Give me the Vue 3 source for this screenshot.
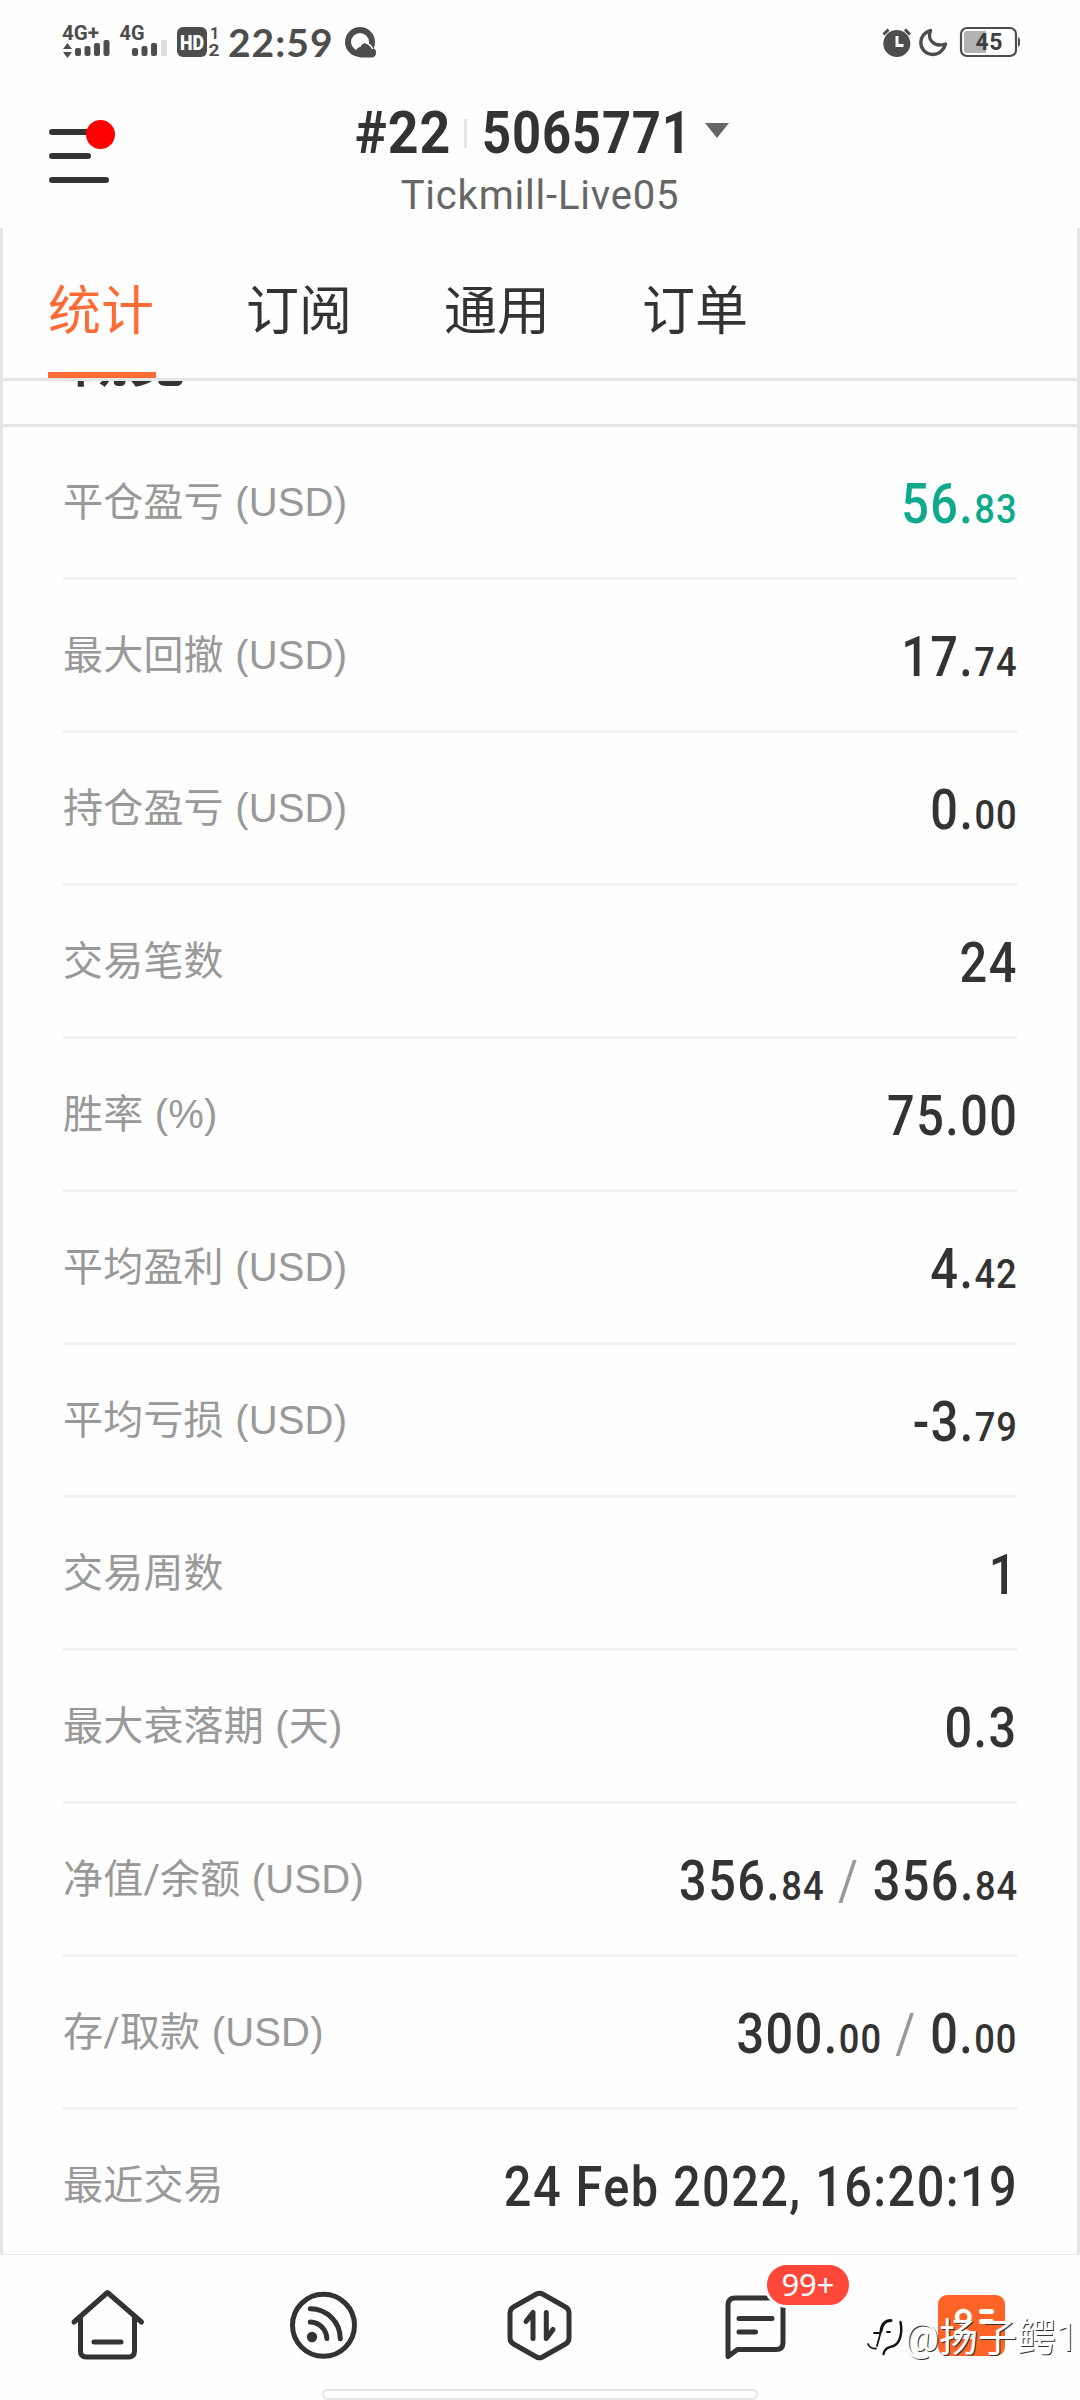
<script setup>
const tabs = ['统计', '订阅', '通用', '订单']

// Each value is a list of [integer part, decimals] pairs
const rows = [
  { label: '平仓盈亏', unit: '(USD)', parts: [['56.', '83']], positive: true },
  { label: '最大回撤', unit: '(USD)', parts: [['17.', '74']] },
  { label: '持仓盈亏', unit: '(USD)', parts: [['0.', '00']] },
  { label: '交易笔数', parts: [['24', '']] },
  { label: '胜率', unit: '(%)', parts: [['75.00', '']] },
  { label: '平均盈利', unit: '(USD)', parts: [['4.', '42']] },
  { label: '平均亏损', unit: '(USD)', parts: [['-3.', '79']] },
  { label: '交易周数', parts: [['1', '']] },
  { label: '最大衰落期', unit: '(天)', parts: [['0.3', '']] },
  { label: '净值/余额', unit: '(USD)', parts: [['356.', '84'], ['356.', '84']] },
  { label: '存/取款', unit: '(USD)', parts: [['300.', '00'], ['0.', '00']] },
  { label: '最近交易', parts: [['24 Feb 2022, 16:20:19', '']] },
]
</script>

<template>
  <div class="screen">
    <div class="status">
      <div class="status-left">
        <svg class="signals" width="160" height="40" viewBox="62 22 160 40">
          <g fill="#4d4d4d">
            <text x="62" y="40" class="net" textLength="37" lengthAdjust="spacingAndGlyphs">4G+</text>
            <path d="M67.5 43l4.5 6h-9zM67.5 58l4.5-6h-9z" />
            <rect x="75" y="48" width="6" height="8" rx="2" />
            <rect x="84.5" y="46" width="6" height="10" rx="2" />
            <rect x="94" y="43" width="6" height="13" rx="2" />
            <rect x="103.500" y="40" width="6" height="16" rx="2" />
            <text x="119.500" y="40" class="net" textLength="25" lengthAdjust="spacingAndGlyphs">4G</text>
            <rect x="132" y="48" width="6" height="8" rx="2" />
            <rect x="141.500" y="46" width="6" height="10" rx="2" />
            <rect x="151" y="43" width="6" height="13" rx="2" />
            <rect x="161" y="40" width="6" height="16" rx="1" fill="#dedede" />
            <rect x="177" y="27" width="30" height="30" rx="6" />
            <text x="180" y="49.500" class="hd" fill="#fff" textLength="24" lengthAdjust="spacingAndGlyphs">HD</text>
            <text x="210" y="38.500" class="sim">1</text>
            <text x="208.500" y="56" class="sim" textLength="11" lengthAdjust="spacingAndGlyphs">2</text>
          </g>
        </svg>
        <span class="time">22:59</span>
        <svg class="q-icon" width="32" height="32" viewBox="344 26 32 32">
          <circle cx="360" cy="42" r="12" fill="none" stroke="#4d4d4d" stroke-width="6" />
          <path d="M361 57.500a5.300 5.300 0 0 1-.6-10.500 6.200 6.200 0 0 1 11.800 1 4.800 4.800 0 0 1-1 9.500z" fill="#4d4d4d" />
          <path d="M365.500 43c3 .5 5.500 2.500 7.200 6" fill="none" stroke="#fff" stroke-width="1.600" />
        </svg>
      </div>
      <svg width="140" height="36" viewBox="880 24 140 36">
        <circle cx="896.800" cy="43.500" r="13.500" fill="#4d4d4d" />
        <path d="M883.500 34.500l5-5M910 34.500l-5-5" stroke="#4d4d4d" stroke-width="3" />
        <path d="M897 36v9.500h6.500" fill="none" stroke="#fff" stroke-width="3" />
        <path d="M930.500 30.500c-3.500 8.500 3 17.500 15 13.500-1.500 6-6.500 10.500-12.700 10.500-7 0-12-5.500-12-12 0-5.500 3.700-10.500 9.700-12z" fill="none" stroke="#4d4d4d" stroke-width="3.400" stroke-linejoin="round" />
        <rect x="961" y="28" width="55" height="28" rx="6" fill="#fff" stroke="#4d4d4d" stroke-width="2.200" />
        <path d="M986 31h-19a3 3 0 0 0-3 3v16a3 3 0 0 0 3 3h19z" fill="#b2b2b2" />
        <path d="M1018 37q2 1 2 3v4q0 2-2 3z" fill="#4d4d4d" />
        <text x="975.500" y="50" class="batt" fill="#404040" textLength="27">45</text>
      </svg>
    </div>

    <header class="header">
      <div class="menu">
        <i class="bar long"></i><i class="bar mid"></i><i class="bar long"></i>
        <b class="dot"></b>
      </div>
      <div class="account">
        <div class="account-row">
          <span class="rank">#22</span>
          <i class="sep"></i>
          <span class="login">5065771</span>
          <svg width="24" height="16" viewBox="0 0 24 16"><path d="M0 0h24L12 15z" fill="#666" /></svg>
        </div>
        <div class="server"><span>Tickmill-Live05</span></div>
      </div>
    </header>

    <main class="panel">
      <nav class="tabs">
        <span v-for="(t, i) in tabs" :key="t" class="tab" :class="{ active: i === 0 }">{{ t }}</span>
      </nav>
      <div class="section"><span class="section-title">概览</span></div>
      <div class="rows">
        <div v-for="r in rows" :key="r.label" class="row">
          <span class="label">{{ r.label }}<span v-if="r.unit" class="unit">&nbsp;{{ r.unit }}</span></span>
          <span class="value" :class="{ positive: r.positive }">
            <template v-for="(p, i) in r.parts" :key="i"><span v-if="i" class="slash">/</span>{{ p[0] }}<small v-if="p[1]">{{ p[1] }}</small></template>
          </span>
        </div>
      </div>
    </main>

    <footer class="nav">
      <div class="nav-item">
        <svg width="100" height="100" viewBox="58 2275 100 100" class="line">
          <path d="M74 2322l33.500-29.500L141.500 2322" />
          <path d="M80.500 2317v34q0 6 6 6h42q6 0 6-6v-34M94 2342h27" />
        </svg>
      </div>
      <div class="nav-item">
        <svg width="100" height="100" viewBox="274 2275 100 100" class="line">
          <circle cx="323.500" cy="2325.300" r="31" />
          <circle cx="312" cy="2337" r="5.200" fill="#333" stroke="none" />
          <path d="M310.300 2322a17 17 0 0 1 16.500 16.500M310.300 2308.700a30 30 0 0 1 30 30" />
        </svg>
      </div>
      <div class="nav-item">
        <svg width="100" height="100" viewBox="490 2275 100 100" class="line">
          <path d="M536.500 2294q3-1.700 6 0l23 13q3.500 2 3.500 6v25q0 4-3.500 6l-23 13q-3 1.700-6 0l-23-13q-3.500-2-3.500-6v-25q0-4 3.500-6z" />
          <path d="M526 2321.500l7-9v26M546.300 2312.500v26l6.700-9" />
        </svg>
      </div>
      <div class="nav-item">
        <svg width="100" height="100" viewBox="706 2275 100 100" class="line">
          <path d="M728 2356.500V2305q0-7 7-7h41q7 0 7 7v37.500q0 7-7 7h-38.500z" />
          <path d="M739 2318.500h33M739 2332h16.500" />
        </svg>
        <span class="badge">99+</span>
      </div>
      <div class="nav-item">
        <svg width="100" height="100" viewBox="922 2275 100 100">
          <rect x="938" y="2295" width="67" height="61" rx="9" fill="#ff6426" />
          <circle cx="963.300" cy="2317" r="6.300" fill="none" stroke="#fff" stroke-width="4.500" />
          <path d="M953 2339q0-10 10.300-10t10.300 10z" fill="#fff" />
          <path d="M981.500 2311.500h10M981.500 2321.500h10" stroke="#fff" stroke-width="5" stroke-linecap="round" />
        </svg>
      </div>
      <i class="home-bar"></i>
      <div class="watermark">
        <svg width="40" height="42" viewBox="864 2324 40 42" fill="none" stroke="#111" stroke-linecap="round">
          <path d="M881 2338c1-8 5-10.500 10-10.500" stroke-width="3" />
          <path d="M900.500 2329c2 10 0 21-7 24-5 1.500-9 2-10 8" stroke-width="2.400" />
          <path d="M874 2340h6.500l-3.500 13M887 2339h3M868 2351q2 5 8 4.500" stroke-width="1.800" />
        </svg>
        <span>@扬子鳄1</span>
      </div>
    </footer>
  </div>
</template>

<style>
body { margin: 0; background: #fff; }
</style>

<style scoped>
.screen {
  width: 1080px;
  height: 2400px;
  display: flex;
  flex-direction: column;
  overflow: hidden;
  background: #fefefe;
  color: #333;
  font-family: Roboto, "Noto Sans CJK SC", sans-serif;
}
.status {
  height: 84px;
  box-sizing: border-box;
  padding: 0 60px 0 62px;
  display: flex;
  align-items: center;
  justify-content: space-between;
  flex: none;
}
.status-left { display: flex; align-items: center; }
.net { font: 700 21px Roboto, sans-serif; }
.hd { font: 900 20px Roboto, sans-serif; }
.sim { font: 700 16px Roboto, sans-serif; }
.batt { font: 700 23px Roboto, sans-serif; }
.time {
  width: 122px;
  padding-left: 6px;
  box-sizing: border-box;
  font: 700 39px/40px Lato, sans-serif;
  letter-spacing: 1px;
  color: #4d4d4d;
}
.header {
  height: 144px;
  flex: none;
  position: relative;
}
.menu {
  position: absolute;
  left: 49px;
  top: 45px;
  display: flex;
  flex-direction: column;
  gap: 18px;
}
.bar { height: 6px; border-radius: 3px; background: #333; }
.long { width: 60px; }
.mid { width: 42px; }
.dot {
  position: absolute;
  left: 37px;
  top: -9px;
  width: 29px;
  height: 29px;
  border-radius: 50%;
  background: #f00;
}
.account { padding-top: 14px; }
.account-row {
  height: 70px;
  padding-left: 355px;
  display: flex;
  align-items: center;
}
.account-row svg { margin: -5px 0 0 20px; }
.rank, .login {
  font-size: 59px;
  font-weight: 700;
  line-height: 70px;
  transform: scaleX(0.86);
  transform-origin: left;
  letter-spacing: 1px;
  white-space: nowrap;
}
.rank { width: 109px; transform: scaleX(0.91); }
.login { width: 203px; }
.sep { width: 3px; height: 29px; margin-right: 15px; background: #e5e5e5; }
.server {
  height: 50px;
  margin-top: 3px;
  display: flex;
  justify-content: center;
  font-size: 40px;
  line-height: 50px;
  color: #666;
  letter-spacing: 0.8px;
}
.panel {
  height: 2026px;
  flex: none;
  box-sizing: border-box;
  border: solid #e5e5e5;
  border-width: 0 3px;
  overflow: hidden;
}
.tabs {
  height: 153px;
  box-sizing: border-box;
  border-bottom: 3px solid #e5e5e5;
  padding-left: 45px;
  display: flex;
  gap: 90px;
}
.tab {
  width: 108px;
  height: 150px;
  box-sizing: border-box;
  font-size: 53px;
  line-height: 168px;
}
.active { color: #ff6b35; border-bottom: 6px solid #ff6b35; }
.section {
  height: 46px;
  box-sizing: border-box;
  border-bottom: 3px solid #e5e5e5;
  padding-left: 67px;
  display: flex;
  align-items: flex-start;
  overflow: hidden;
}
.section-title {
  font-size: 58px;
  font-weight: 700;
  line-height: 60px;
  margin-top: -50px;
}
.rows { padding: 0 60px; }
.row {
  height: 153px;
  box-sizing: border-box;
  border-bottom: 3px solid #f2f2f2;
  display: flex;
  align-items: center;
  justify-content: space-between;
  white-space: nowrap;
}
.label {
  padding-top: 2px;
  font-size: 40px;
  line-height: 60px;
  color: #999;
  letter-spacing: 0.2px;
}
.unit { font-family: "Liberation Sans", "Noto Sans CJK SC", sans-serif; line-height: 0; }
.value {
  padding-top: 3px;
  margin-right: -1px;
  font-size: 55px;
  font-weight: 500;
  line-height: 60px;
  letter-spacing: 1.6px;
  transform: scaleX(0.885);
  transform-origin: right;
}
.value small { font-size: 41px; line-height: 0; letter-spacing: 1.2px; }
.positive { color: #0faa8c; }
.slash { margin: 0 15px; color: #999; font-weight: 400; }
.nav {
  height: 146px;
  flex: none;
  position: relative;
  box-sizing: border-box;
  border-top: 1px solid #ececec;
  display: flex;
}
.nav-item {
  width: 216px;
  height: 140px;
  display: flex;
  justify-content: center;
  align-items: center;
  position: relative;
}
.line { fill: none; stroke: #333; stroke-width: 5; stroke-linecap: round; stroke-linejoin: round; }
.badge {
  position: absolute;
  left: 116px;
  top: 7px;
  width: 82px;
  height: 40px;
  border: 3px solid #fff;
  border-radius: 23px;
  background: #ff4839;
  color: #fff;
  font-family: "Noto Sans", sans-serif;
  font-size: 31px;
  line-height: 39px;
  text-align: center;
}
.home-bar {
  position: absolute;
  left: 322px;
  top: 134px;
  width: 436px;
  height: 11px;
  box-sizing: border-box;
  border: 2px solid #e6e6e6;
  border-radius: 6px;
  background: #fff;
}
.watermark {
  position: absolute;
  left: 864px;
  top: 62px;
  display: flex;
  align-items: center;
  color: #fff;
  font-size: 39px;
  line-height: 42px;
  text-shadow: 1px 1px 0 #333;
  white-space: nowrap;
}
</style>
